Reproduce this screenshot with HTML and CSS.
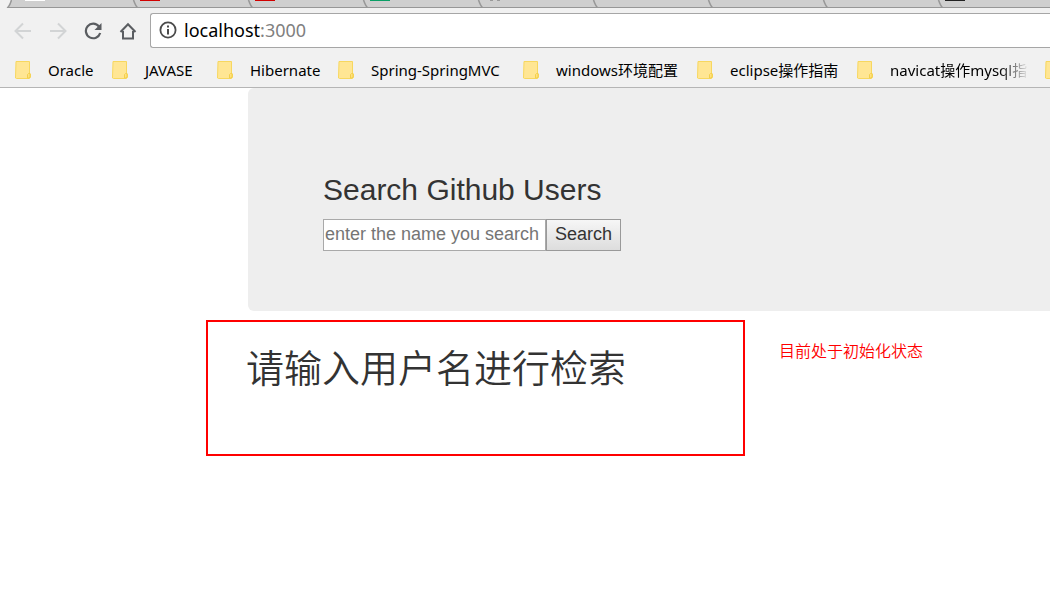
FILE: index.html
```html
<!DOCTYPE html>
<html lang="zh-CN">
<head>
<meta charset="utf-8">
<title>Search Github Users</title>
<link rel="stylesheet" href="styles.css">
</head>
<body>
<svg class="defs" aria-hidden="true">
  <symbol id="folder" viewBox="0 0 16 18">
    <path d="M1 .5h13.500v12.500h1v3.500l-1 1h-13l-1-.5z" fill="#ffe694" stroke="#f7d75f"/>
    <path d="M12.500 17v-3.500l1-1h1.500v3.500l-1 1z" fill="#ffe27f" stroke="#f3cf4d"/>
  </symbol>
  <symbol id="edge" viewBox="0 0 10 8">
    <path d="M1.500 0Q4 7 6 8" fill="none" stroke="#979797" stroke-width="1.500"/>
  </symbol>
</svg>
<header class="browser">
  <div class="tabs">
    <svg class="tab-start" viewBox="0 0 12 8" aria-hidden="true"><path d="M0 0h11L7 8H0z" fill="#f1f1f1"/><path d="M11.500 0Q9.500 7 7 8" fill="none" stroke="#979797" stroke-width="1.500"/></svg>
    <div class="tab first"><span class="favicon white"></span><svg class="edge"><use href="#edge"/></svg></div>
    <div class="tab"><span class="favicon red"></span><svg class="edge"><use href="#edge"/></svg></div>
    <div class="tab"><span class="favicon red"></span><svg class="edge"><use href="#edge"/></svg></div>
    <div class="tab"><span class="favicon green"></span><svg class="edge"><use href="#edge"/></svg></div>
    <div class="tab"><span class="favicon paws"></span><svg class="edge"><use href="#edge"/></svg></div>
    <div class="tab"><svg class="edge"><use href="#edge"/></svg></div>
    <div class="tab"><svg class="edge"><use href="#edge"/></svg></div>
    <div class="tab"><svg class="edge"><use href="#edge"/></svg></div>
    <div class="tab"><span class="favicon dark"></span></div>
  </div>
  <div class="toolbar">
    <button class="nav off" aria-label="Back"><svg viewBox="0 0 18 18"><path d="M17 9H2M9 1.500L1.500 9 9 16.500"/></svg></button>
    <button class="nav off" aria-label="Forward"><svg viewBox="0 0 18 18"><path d="M1 9h15M9 1.500L16.500 9 9 16.500"/></svg></button>
    <button class="nav" aria-label="Reload"><svg viewBox="0 0 18 18"><path d="M15 4.500A7.300 7.300 0 1 0 16.200 11" stroke-width="2.200"/><path d="M17.500 1v7h-7z" fill="#5a5d61" stroke="none"/></svg></button>
    <button class="nav" aria-label="Home"><svg viewBox="0 0 18 18"><path d="M1.500 10L9 2.200l7.500 7.800M4 9v7.500h10V9" stroke-width="2"/></svg></button>
    <a class="address" href="#">
      <svg class="info" viewBox="0 0 18 18" aria-hidden="true"><circle cx="9" cy="9" r="7.600" fill="none" stroke="#4b4b4b" stroke-width="1.800"/><path d="M9 8v5.500M9 4.500v2" stroke="#4b4b4b" stroke-width="2"/></svg>
      <span>localhost<span class="port">:3000</span></span>
    </a>
  </div>
  <nav class="bookmarks">
    <a href="#"><svg><use href="#folder"/></svg>Oracle</a>
    <a href="#"><svg><use href="#folder"/></svg>JAVASE</a>
    <a href="#"><svg><use href="#folder"/></svg>Hibernate</a>
    <a href="#"><svg><use href="#folder"/></svg>Spring-SpringMVC</a>
    <a href="#"><svg><use href="#folder"/></svg>windows环境配置</a>
    <a href="#"><svg><use href="#folder"/></svg>eclipse操作指南</a>
    <a href="#" class="fade"><svg><use href="#folder"/></svg>navicat操作mysql指</a>
    <a href="#" aria-label="More"><svg><use href="#folder"/></svg></a>
  </nav>
</header>
<main>
  <form class="jumbotron">
    <h3><label for="name">Search Github Users</label></h3>
    <div class="search">
      <input id="name" type="text" placeholder="enter the name you search">
      <button type="button">Search</button>
    </div>
  </form>
  <section class="result">
    <div class="frame"><h1>请输入用户名进行检索</h1></div>
    <p class="note">目前处于初始化状态</p>
  </section>
</main>
</body>
</html>
```
FILE: styles.css
```css
* { box-sizing: border-box; }
body {
  margin: 0;
  overflow-x: hidden;
  background: #fff;
  color: #333;
  font-family: "Liberation Sans", "Noto Sans CJK SC", sans-serif;
}
.defs { display: none; }
.browser {
  background: #f1f1f1;
  border-bottom: 1px solid #b5b5b5;
  overflow: hidden;
}
.tabs {
  display: flex;
  height: 8px;
  background: #cfcfcf;
  border-bottom: 1px solid #979797;
}
.tab-start { width: 12px; height: 8px; flex: none; }
.tab {
  display: flex;
  flex: none;
  width: 115px;
  padding-left: 7px;
}
.tab.first { width: 121px; padding-left: 13px; }
.edge { width: 10px; height: 8px; margin: 0 -9px 0 auto; }
.favicon { width: 20px; height: 1px; }
.white { background: #fff; }
.red { background: #d10000; }
.green { background: #0a9f65; }
.dark { background: #222; }
.paws {
  width: 10px;
  margin-left: 5px;
  border-left: 3px solid #999;
  border-right: 3px solid #999;
}
.toolbar {
  display: flex;
  align-items: center;
  padding: 5px 0 5px 14px;
}
.nav {
  width: 18px;
  height: 18px;
  margin-right: 17px;
  padding: 0;
  border: 0;
  background: none;
}
.nav svg { display: block; width: 18px; height: 18px; fill: none; stroke: #5a5d61; }
.nav.off svg { stroke: #d2d4d5; stroke-width: 2; }
.nav:nth-child(4) { margin-right: 13px; }
.address {
  display: flex;
  flex: 1;
  align-items: center;
  gap: 7px;
  height: 35px;
  padding: 0 0 2px 8px;
  border: 1px solid #a6a6a6;
  border-right: 0;
  border-radius: 3px 0 0 3px;
  background: #fff;
  color: #000;
  font: 18px "Noto Sans", sans-serif;
  text-decoration: none;
}
.info { width: 18px; height: 18px; }
.port { color: #808080; }
.bookmarks {
  display: grid;
  grid-template-columns: 97px 105px 121px 185px 174px 160px 188px 48px;
  height: 34px;
  padding-left: 15px;
}
.bookmarks a {
  display: flex;
  align-items: center;
  gap: 17px;
  color: #000;
  font: 15px/18px "Noto Sans", "Noto Sans CJK SC", sans-serif;
  text-decoration: none;
  white-space: nowrap;
}
.bookmarks svg { flex: none; width: 16px; height: 18px; }
.bookmarks .fade {
  margin-right: 16px;
  overflow: hidden;
  -webkit-mask-image: linear-gradient(to right, #000 142px, transparent 172px);
  mask-image: linear-gradient(to right, #000 142px, transparent 172px);
}
.jumbotron {
  margin-left: 248px;
  padding: 84px 75px 60px;
  border-radius: 6px 0 0 6px;
  background: #eee;
}
h3 { margin: 0 0 12px; font-size: 30px; font-weight: 400; line-height: 35px; }
.search { display: flex; }
.search input {
  width: 223px;
  height: 32px;
  padding: 0 1px 2px;
  border: 1px solid #a9a9a9;
  font: 18px "Liberation Sans", sans-serif;
}
.search input::placeholder { color: #757575; }
.search button {
  height: 32px;
  padding: 0 8px 2px;
  border: 1px solid #999;
  background: linear-gradient(#f6f6f6, #ddd);
  color: #333;
  font: 18px "Liberation Sans", sans-serif;
}
.result {
  display: flex;
  align-items: flex-start;
  gap: 34px;
  margin: 9px 0 0 206px;
}
.frame {
  width: 539px;
  height: 136px;
  padding: 16px 38px;
  border: 2px solid #f00;
}
h1 {
  margin: 0;
  font: 350 38px/56px "Noto Sans CJK SC", sans-serif;
  white-space: nowrap;
}
.note {
  margin: 18px 0 0;
  color: #f00;
  font: 350 16px/24px "Noto Sans CJK SC", sans-serif;
}
```
